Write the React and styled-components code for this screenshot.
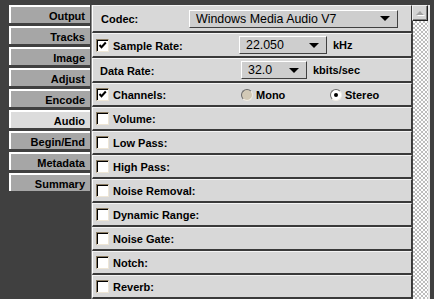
import React from 'react';
import styled, { createGlobalStyle } from 'styled-components';

const GlobalStyle = createGlobalStyle`
    html, body { margin:0; padding:0; background:#404040; overflow:hidden; }
    body { font-family: "Liberation Sans", Arial, sans-serif; }
`

const Screen = styled.div`
    display:flex; height:299px; padding-top:5px; box-sizing:border-box;
    overflow:hidden;
`

const TabColumn = styled.div`
    display:flex; flex-direction:column; gap:3px;
    margin-left:9px; width:81px; flex:none;
`

const Tab = styled.div`
    height:18px; box-sizing:border-box;
    display:flex; align-items:center; justify-content:flex-end;
    padding:1px 5px 0 0;
    border-top:2px solid #fff; border-left:2px solid #fff;
    background-color:${p => p.active ? '#dcdcdc' : '#a6a6a6'};
    font-size:11px; font-weight:700; color:#000;
`

const Panel = styled.div`
    width:320px; flex:none; margin-left:1px;
    border-left:1px solid #8c8c8c;
    display:flex; flex-direction:column;
`

const Row = styled.div`
    height:${p => p.h || 24}px; box-sizing:border-box; flex:none;
    display:flex; align-items:center;
    padding-left:${p => p.pad || 3}px;
    background-color:#d8d8d8;
    border-top:1px solid #f4f4f4; border-left:1px solid #fff;
    border-right:1px solid #3a3a3a; border-bottom:2px solid #3a3a3a;
    font-size:11px; font-weight:700; color:#000;
`

const Label = styled.span`
    width:${p => p.w ? p.w + 'px' : 'auto'}; flex:none;
    padding-top:1px; white-space:nowrap;
`

const Box = styled.span`
    width:13px; height:13px; box-sizing:border-box; flex:none;
    margin-right:4px; background:#fff;
    border:1px solid; border-color:#8a7c64 #eee6d6 #eee6d6 #8a7c64;
    box-shadow: inset 1px 1px 0 #000;
    display:flex; align-items:center; justify-content:center;
`

const Combo = styled.div`
    width:${p => p.w}px; height:18px; box-sizing:border-box; flex:none;
    display:flex; align-items:center; justify-content:space-between;
    padding:0 7px 0 6px;
    background-color:#cecece;
    border:1px solid; border-color:#fff #404040 #404040 #fff;
    font-size:12.4px; font-weight:400; color:#000;
`

const Arrow = styled.span`
    width:0; height:0; flex:none;
    border-left:5px solid transparent; border-right:5px solid transparent;
    border-top:5px solid #000;
`

const Unit = styled.span`
    margin-left:${p => p.gap}px;
`

const Radio = styled.span`
    width:12px; height:12px; box-sizing:border-box; flex:none; border-radius:50%;
    margin-right:3px;
    background-color:${p => p.on ? '#fff' : '#d2c9b6'};
    border:1px solid; border-color:#6a6a6a #f0ece4 #f0ece4 #6a6a6a;
    display:flex; align-items:center; justify-content:center;
    &::after {
        content:''; width:4px; height:4px; border-radius:50%;
        background:${p => p.on ? '#000' : 'transparent'};
    }
`

const RadioGroup = styled.span`
    display:flex; align-items:center; width:${p => p.w}px; flex:none;
`

const ScrollBar = styled.div`
    width:16px; flex:none; display:flex; flex-direction:column;
    border-right:2px solid #e8e8e8;
`

const ScrollButton = styled.div`
    height:16px; box-sizing:border-box; flex:none;
    background-color:#d4d4d4;
    border:1px solid; border-color:#eee #202020 #202020 #eee;
    box-shadow: inset -1px -1px 0 #808080;
    display:flex; align-items:center; justify-content:center;
`

const UpArrow = styled.span`
    width:0; height:0;
    border-left:4px solid transparent; border-right:4px solid transparent;
    border-bottom:4px solid #a0a0a0;
    filter: drop-shadow(1px 1px 0 #fff);
`

const Track = styled.div`
    flex:1;
    background-color:#fff;
    background-image: conic-gradient(#bdbdbd 25%, #fff 0 50%, #bdbdbd 0 75%, #fff 0);
    background-size:4px 4px;
    border-left:1px solid #404040;
`

const tabs = ['Output', 'Tracks', 'Image', 'Adjust', 'Encode', 'Audio', 'Begin/End', 'Metadata', 'Summary'];
const filters = ['Volume:', 'Low Pass:', 'High Pass:', 'Noise Removal:', 'Dynamic Range:', 'Noise Gate:', 'Notch:', 'Reverb:'];

function Check({ on }) {
    return (
        <Box>
            {on && (
                <svg width="9" height="9" viewBox="0 0 9 9">
                    <path d="M1.5 4 L3.5 6.2 L7.8 1.5" stroke="#000" strokeWidth="2" fill="none" />
                </svg>
            )}
        </Box>
    );
}

function App() {
    return (
        <>
            <GlobalStyle />
            <Screen>
                <TabColumn>
                    {tabs.map(t => <Tab key={t} active={t === 'Audio'}>{t}</Tab>)}
                </TabColumn>
                <Panel>
                    <Row h={28} pad={8}>
                        <Label w={88}>Codec:</Label>
                        <Combo w={209}>Windows Media Audio V7<Arrow /></Combo>
                    </Row>
                    <Row h={25}>
                        <Check on />
                        <Label w={126}>Sample Rate:</Label>
                        <Combo w={88}>22.050<Arrow /></Combo>
                        <Unit gap={6}>kHz</Unit>
                    </Row>
                    <Row h={25} pad={7}>
                        <Label w={141}>Data Rate:</Label>
                        <Combo w={66}>32.0<Arrow /></Combo>
                        <Unit gap={6}>kbits/sec</Unit>
                    </Row>
                    <Row>
                        <Check on />
                        <Label w={128}>Channels:</Label>
                        <RadioGroup w={89}><Radio />Mono</RadioGroup>
                        <RadioGroup><Radio on />Stereo</RadioGroup>
                    </Row>
                    {filters.map(f => (
                        <Row key={f}>
                            <Check />
                            <Label>{f}</Label>
                        </Row>
                    ))}
                </Panel>
                <ScrollBar>
                    <ScrollButton><UpArrow /></ScrollButton>
                    <Track />
                </ScrollBar>
            </Screen>
        </>
    );
}

export default App;
